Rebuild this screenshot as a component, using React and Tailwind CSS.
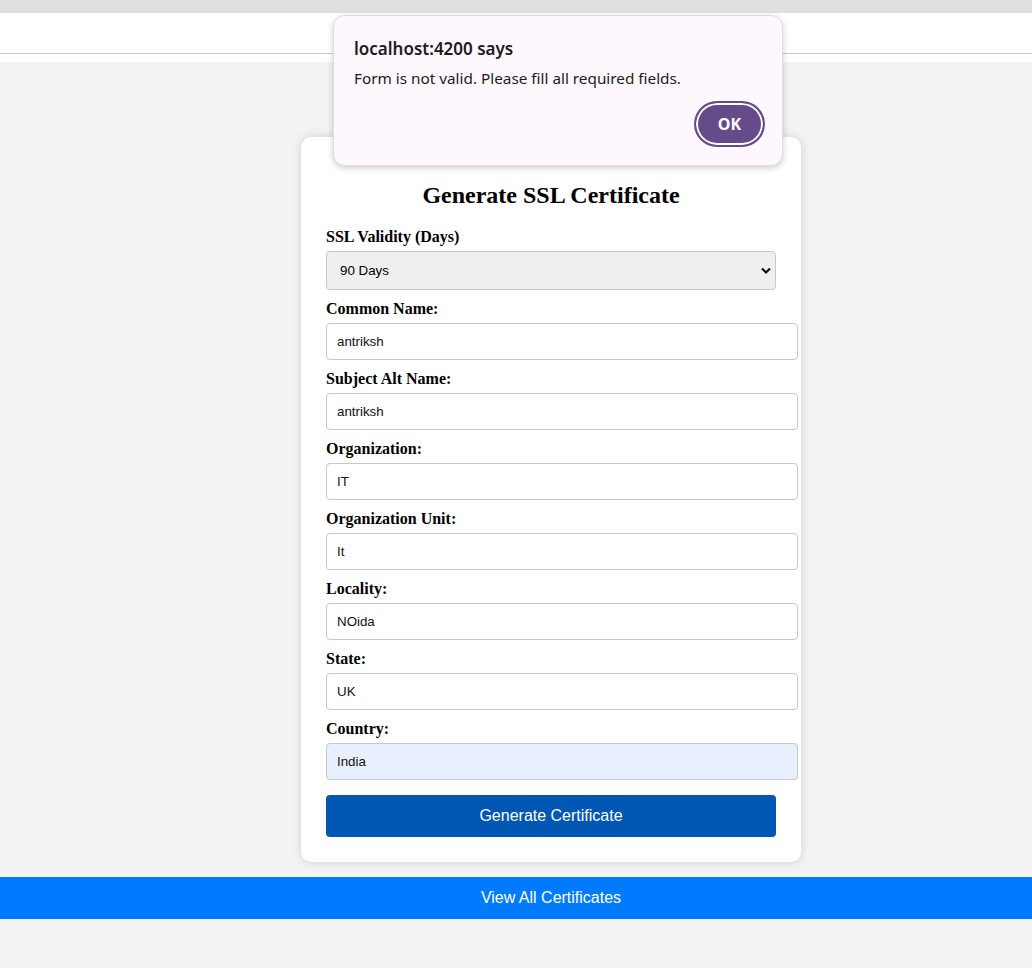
import { useState } from "react";

const fields = [
    { label: "Common Name:", value: "antriksh" },
    { label: "Subject Alt Name:", value: "antriksh" },
    { label: "Organization:", value: "IT" },
    { label: "Organization Unit:", value: "It" },
    { label: "Locality:", value: "NOida" },
    { label: "State:", value: "UK" },
    { label: "Country:", value: "India", autofill: true },
];

function Field({ label, value, autofill }) {
    const [val, setVal] = useState(value);
    return (
        <div className="flex flex-col">
            <label className="text-[16px] leading-[18px] font-bold text-black mb-[5px]">{label}</label>
            <input
                value={val}
                onChange={(e) => setVal(e.target.value)}
                className={
                    "w-[472px] h-[37px] px-[10px] border border-[#c8c8c8] rounded-[4px] text-[13.33px] text-[#111] outline-none mb-[10px] " +
                    (autofill ? "bg-[#e8f0fe]" : "bg-white")
                }
                style={{ fontFamily: '"Liberation Sans", Arial, sans-serif' }}
            />
        </div>
    );
}

function App() {
    return (
        <div className="min-h-screen bg-[#f3f3f3] relative" style={{ fontFamily: '"Liberation Serif", "Times New Roman", serif' }}>
            <div className="h-[13px] bg-[#e0e0e0]"></div>
            <div className="h-[41px] bg-white border-b border-[#cccccc]"></div>
            <div className="h-[8px] bg-white"></div>

            <div className="flex justify-center pl-[70px] pt-[75px]">
                <div className="w-[500px] bg-white rounded-[10px] p-[25px] shadow-[0_0_10px_rgba(0,0,0,0.15)]">
                    <h2 className="text-[24px] leading-[28px] font-bold text-center text-black mt-[19px] mb-[19px]">
                        Generate SSL Certificate
                    </h2>
                    <div className="flex flex-col">
                        <label className="text-[16px] leading-[18px] font-bold text-black mb-[5px]">SSL Validity (Days)</label>
                        <div className="relative w-[450px] mb-[10px]">
                            <select
                                defaultValue="90"
                                className="appearance-none w-full h-[39px] pl-[13px] bg-[#efefef] border border-[#c8c8c8] rounded-[4px] text-[13.33px] text-black outline-none"
                                style={{ fontFamily: '"Liberation Sans", Arial, sans-serif' }}
                            >
                                <option value="30">30 Days</option>
                                <option value="90">90 Days</option>
                                <option value="365">365 Days</option>
                            </select>
                            <svg className="absolute right-[4px] top-[15px] pointer-events-none" width="12" height="9" viewBox="0 0 12 9">
                                <path d="M2 2.5 L6 6.5 L10 2.5" fill="none" stroke="#111" strokeWidth="2.2" />
                            </svg>
                        </div>
                    </div>
                    {fields.map((f) => (
                        <Field key={f.label} {...f} />
                    ))}
                    <button
                        className="w-[450px] h-[42px] mt-[5px] bg-[#0056b3] text-white text-[16px] rounded-[4px]"
                        style={{ fontFamily: '"Liberation Sans", Arial, sans-serif' }}
                    >
                        Generate Certificate
                    </button>
                </div>
            </div>

            <div
                className="mt-[15px] h-[42px] bg-[#007bff] text-white text-[16px] flex items-center justify-center pl-[70px]"
                style={{ fontFamily: '"Liberation Sans", Arial, sans-serif' }}
            >
                View All Certificates
            </div>

            {/* alert dialog */}
            <div
                className="absolute left-[333px] top-[15px] w-[450px] h-[151px] bg-[#fef8fe] border border-[#e2dce2] rounded-[12px] shadow-[0_2px_6px_rgba(0,0,0,0.2)] px-[20px] pt-[21px]"
                style={{ fontFamily: '"Noto Sans", "Open Sans", sans-serif' }}
            >
                <div className="text-[17px] leading-[24px] font-semibold text-[#1d1b20]">localhost:4200 says</div>
                <div className="text-[15.3px] leading-[22px] text-[#1d1b20] mt-[6px]">Form is not valid. Please fill all required fields.</div>
                <div className="flex justify-end mt-[12px]">
                    <button className="w-[71px] h-[46px] rounded-full bg-[#654b8a] border-2 border-[#654b8a] text-white text-[16px] font-bold mr-[-3px] shadow-[inset_0_0_0_2px_white]">
                        OK
                    </button>
                </div>
            </div>
        </div>
    );
}

export default App;
